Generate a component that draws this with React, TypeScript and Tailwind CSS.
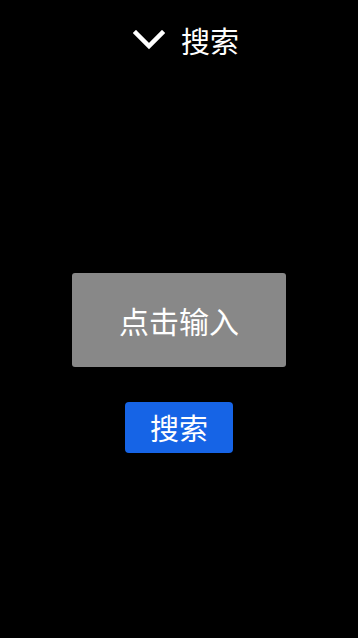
import React from 'react';

const font = { fontFamily: '"Noto Sans CJK SC", "Noto Sans", sans-serif' };

const ChevronDown: React.FC = () => (
  <svg width="32" height="20" viewBox="0 0 32 20" fill="none">
    <path d="M3 3 L16 16 L29 3" stroke="white" strokeWidth="4.5" strokeLinecap="square" />
  </svg>
);

export default function App() {
  return (
    <div className="w-[358px] h-[638px] bg-black text-white flex flex-col items-center" style={font}>
      {/* header */}
      <div className="h-[80px] w-full flex items-center justify-center gap-[16px] pl-[14px]">
        <ChevronDown />
        <span className="text-[29px] leading-none">搜索</span>
      </div>

      {/* input box */}
      <div className="mt-[193px] w-[214px] h-[94px] rounded-[3px] bg-[#888888] flex items-center justify-center">
        <span className="text-[30px] leading-none">点击输入</span>
      </div>

      {/* search button */}
      <button className="mt-[35px] w-[108px] h-[51px] rounded-[4px] bg-[#1664e6] flex items-center justify-center">
        <span className="text-[29px] leading-none text-white">搜索</span>
      </button>
    </div>
  );
}
